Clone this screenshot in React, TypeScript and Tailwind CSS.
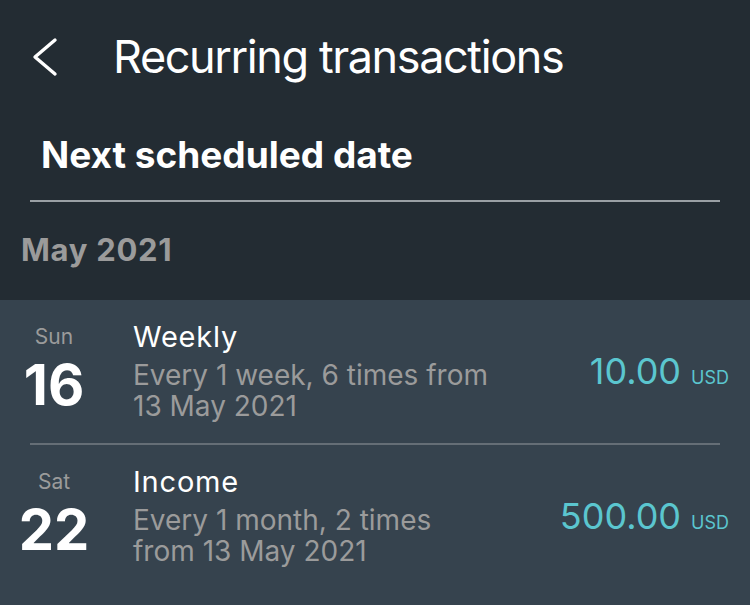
const rows = [
  {
    day: 'Sun',
    date: '16',
    title: 'Weekly',
    lines: ['Every 1 week, 6 times from', '13 May 2021'],
    amount: '10.00',
  },
  {
    day: 'Sat',
    date: '22',
    title: 'Income',
    lines: ['Every 1 month, 2 times', 'from 13 May 2021'],
    amount: '500.00',
  },
];

const App = () => {
  return (
    <div className="w-[750px] h-[605px] overflow-hidden bg-[#36434e] font-['Inter','Noto_Sans',sans-serif]">
      {/* Header */}
      <div className="bg-[#232c33]">
        <div className="flex items-center pt-[29px] pl-[30px]">
          <svg width="28" height="40" viewBox="0 0 28 40" fill="none">
            <polyline
              points="25,3 5,20 25,37"
              stroke="white"
              strokeWidth="3.4"
              strokeLinecap="round"
              strokeLinejoin="round"
            />
          </svg>
          <h1 className="ml-[55px] text-[45px] leading-[56px] text-white tracking-[-1.4px]">
            Recurring transactions
          </h1>
        </div>

        <div className="px-[30px]">
          <h2 className="mt-[48px] pl-[11px] text-[37px] leading-[44px] font-bold text-white">
            Next scheduled date
          </h2>
          <div className="mt-[23px] h-[2px] bg-[#9aa0a5]"></div>
        </div>

        <div className="pl-[21px] pt-[29px] pb-[31px] text-[31px] leading-[38px] font-bold text-[#9b9b9b] tracking-[0.7px]">
          May 2021
        </div>
      </div>

      {/* List */}
      <div>
        {rows.map((row, index) => (
          <div key={index}>
            <div className="flex items-start pt-[19px] pb-[21px] pr-[21px]">
              <div className="w-[108px] shrink-0 pt-[4px] text-center">
                <div className="text-[21px] leading-[28px] text-[#9b9b9b]">{row.day}</div>
                <div className="mt-[6px] text-[56px] leading-[56px] font-bold text-white">
                  {row.date}
                </div>
              </div>
              <div className="flex-1 pl-[25px]">
                <div className="text-[29px] leading-[36px] text-white tracking-[0.8px]">
                  {row.title}
                </div>
                <div className="mt-[5px] text-[28px] leading-[31px] text-[#9b9b9b]">
                  {row.lines.map((line) => (
                    <div key={line}>{line}</div>
                  ))}
                </div>
              </div>
              <div className="mt-[30px] flex items-baseline text-[#5bc6cf]">
                <span className="text-[36px] leading-[44px]">{row.amount}</span>
                <span className="ml-[10px] text-[18px] leading-[24px]">USD</span>
              </div>
            </div>
            {index < rows.length - 1 && (
              <div className="mx-[30px] h-[2px] bg-[#656e76]"></div>
            )}
          </div>
        ))}
      </div>
    </div>
  );
};

export default App;
